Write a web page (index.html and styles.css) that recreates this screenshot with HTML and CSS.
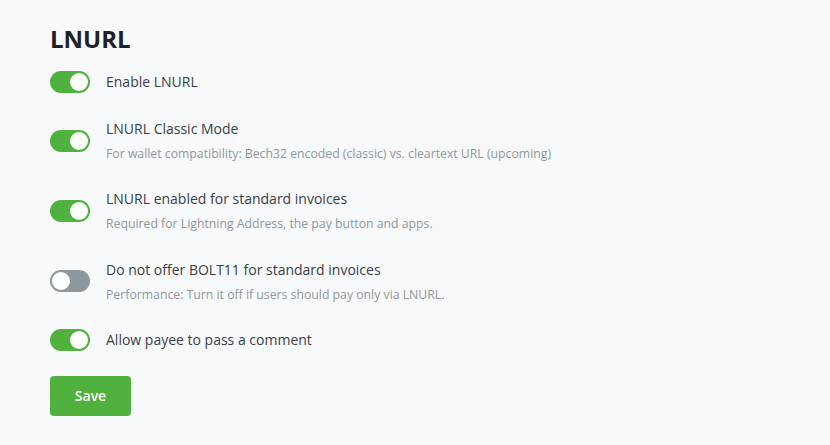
FILE: index.html
```html
<!DOCTYPE html>
<html lang="en">
<head>
<meta charset="utf-8">
<title>LNURL</title>
<link rel="stylesheet" href="styles.css">
</head>
<body>
<main class="page">
  <h2 class="title">LNURL</h2>
  <div class="settings">
    <div class="row">
      <span class="toggle on"><span class="knob"></span></span>
      <div class="text"><div class="label">Enable LNURL</div></div>
    </div>
    <div class="row">
      <span class="toggle on"><span class="knob"></span></span>
      <div class="text">
        <div class="label">LNURL Classic Mode</div>
        <div class="desc">For wallet compatibility: Bech32 encoded (classic) vs. cleartext URL (upcoming)</div>
      </div>
    </div>
    <div class="row">
      <span class="toggle on"><span class="knob"></span></span>
      <div class="text">
        <div class="label">LNURL enabled for standard invoices</div>
        <div class="desc">Required for Lightning Address, the pay button and apps.</div>
      </div>
    </div>
    <div class="row">
      <span class="toggle off"><span class="knob"></span></span>
      <div class="text">
        <div class="label">Do not offer BOLT11 for standard invoices</div>
        <div class="desc">Performance: Turn it off if users should pay only via LNURL.</div>
      </div>
    </div>
    <div class="row">
      <span class="toggle on"><span class="knob"></span></span>
      <div class="text"><div class="label">Allow payee to pass a comment</div></div>
    </div>
  </div>
  <button class="save" type="button">Save</button>
</main>
</body>
</html>
```

FILE: styles.css
```css
html, body {
  margin: 0;
  padding: 0;
}
body {
  background: #f8f9fa;
  font-family: "Open Sans", "Liberation Sans", sans-serif;
  color: #343a40;
}
.page {
  padding: 25px 50px 0 50px;
}
.title {
  margin: 0 0 17px 0;
  font-size: 24px;
  line-height: 1.2;
  font-weight: 700;
  color: #1e2125;
}
.settings {
  display: flex;
  flex-direction: column;
  gap: 25.25px;
}
.row {
  display: flex;
  align-items: center;
  gap: 16px;
}
.toggle {
  position: relative;
  flex: 0 0 auto;
  width: 40px;
  height: 22px;
  border-radius: 11px;
  box-sizing: border-box;
}
.toggle.on {
  background: #51b13e;
}
.toggle.off {
  background: #8f979e;
}
.knob {
  position: absolute;
  top: 2px;
  width: 18px;
  height: 18px;
  border-radius: 50%;
  background: #ffffff;
}
.toggle.on .knob {
  right: 2px;
}
.toggle.off .knob {
  left: 2px;
}
.label {
  font-size: 14px;
  line-height: 21px;
  color: #3a4046;
}
.desc {
  margin-top: 6px;
  font-size: 12.25px;
  line-height: 18px;
  color: #8f979e;
}
.save {
  margin-top: 25px;
  width: 81px;
  height: 40px;
  border: none;
  border-radius: 4px;
  background: #51b13e;
  color: #ffffff;
  font-family: "Open Sans", "Liberation Sans", sans-serif;
  font-size: 14px;
  font-weight: 600;
  padding: 0;
}
```
